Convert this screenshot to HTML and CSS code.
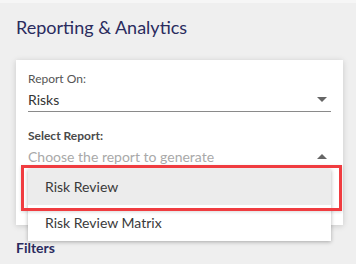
FILE: index.html
```html
<!DOCTYPE html>
<html>
<head>
<meta charset="utf-8">
<link rel="stylesheet" href="styles.css">
</head>
<body>
<div class="page">
  <h1 class="title">Reporting &amp; Analytics</h1>
  <div class="card">
    <div class="field">
      <div class="label">Report On:</div>
      <div class="select">
        <span class="value">Risks</span>
        <span class="caret down"></span>
      </div>
    </div>
    <div class="field open">
      <div class="label strong">Select Report:</div>
      <div class="select noline">
        <span class="placeholder">Choose the report to generate</span>
        <span class="caret up"></span>
      </div>
      <div class="menu">
        <div class="item active">Risk Review</div>
        <div class="item">Risk Review Matrix</div>
      </div>
      <div class="highlight"></div>
    </div>
  </div>
  <h2 class="filters">Filters</h2>
</div>
</body>
</html>
```
FILE: styles.css
```css
html, body {
  margin: 0;
  padding: 0;
  background: #efefef;
  font-family: Lato, "Noto Sans", sans-serif;
  overflow: hidden;
}
.page {
  height: 264px;
  padding: 12px 13px 0 16px;
  border-top: 3px solid #f6f6f6;
  box-sizing: border-box;
}
.title {
  margin: 0;
  font-size: 18px;
  font-weight: 400;
  color: #2a2b5e;
  line-height: 24px;
}
.card {
  margin-top: 21px;
  background: #fff;
  box-shadow: 0 1px 6px rgba(0,0,0,0.16);
  padding: 11px 12px 0 12px;
  height: 165px;
  box-sizing: border-box;
}
.field {
  position: relative;
}
.label {
  font-size: 12px;
  line-height: 16px;
  color: #555;
}
.label.strong {
  color: #4a4a4a;
  font-weight: 700;
}
.select {
  display: flex;
  align-items: center;
  justify-content: space-between;
  height: 24px;
  border-bottom: 1px solid #8a8a8a;
  font-size: 14px;
  color: #333;
}
.select.noline {
  border-bottom: none;
}
.field + .field {
  margin-top: 16px;
}
.placeholder {
  color: #a9a9a9;
}
.caret {
  width: 0;
  height: 0;
  border-left: 5px solid transparent;
  border-right: 5px solid transparent;
  margin-right: 4px;
}
.caret.down {
  border-top: 5px solid #666;
}
.caret.up {
  border-bottom: 5px solid #666;
}
.menu {
  position: absolute;
  left: 0;
  right: 0;
  top: 41px;
  background: #fff;
  box-shadow: 0 1px 4px rgba(0,0,0,0.3);
  padding: 0;
}
.item {
  height: 36px;
  line-height: 36px;
  padding-left: 17px;
  font-size: 14px;
  color: #3a3a3a;
}
.item.active {
  background: #ececec;
}
.highlight {
  position: absolute;
  left: -7px;
  right: -11px;
  top: 37px;
  height: 46px;
  border: 3px solid #f03c40;
  box-sizing: border-box;
  box-shadow: 0 1px 3px rgba(0,0,0,0.15);
}
.filters {
  margin: 13px 0 0 0;
  font-size: 14px;
  font-weight: 700;
  color: #2a2b5e;
  line-height: 20px;
}
```
